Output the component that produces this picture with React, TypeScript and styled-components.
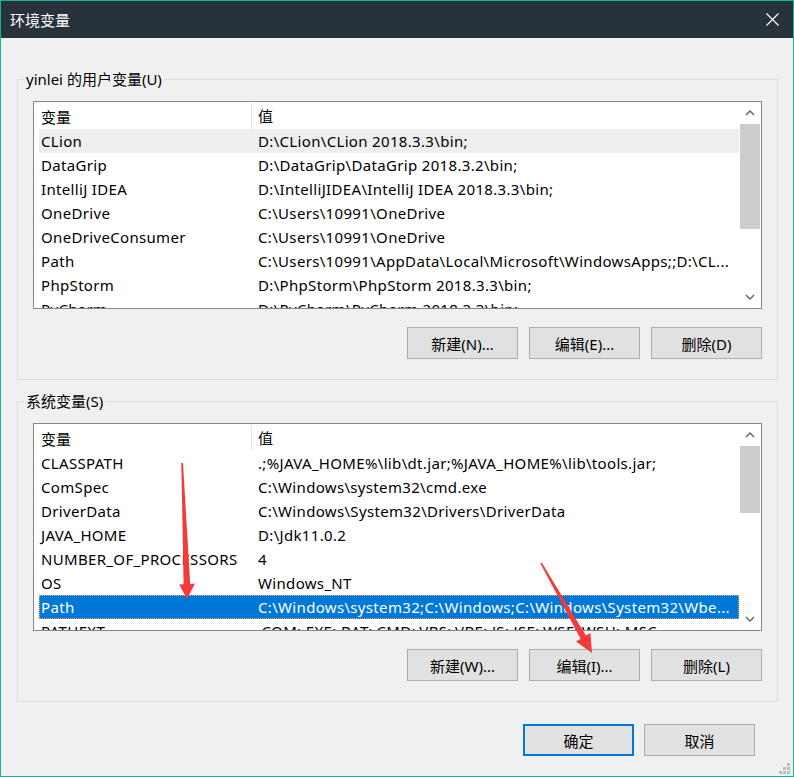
import styled, { createGlobalStyle } from 'styled-components';

type Variable = {
  name: string;
  value: string;
  state?: 'hot' | 'selected';
};

const userVars: Variable[] = [
  { name: 'CLion', value: 'D:\\CLion\\CLion 2018.3.3\\bin;', state: 'hot' },
  { name: 'DataGrip', value: 'D:\\DataGrip\\DataGrip 2018.3.2\\bin;' },
  { name: 'IntelliJ IDEA', value: 'D:\\IntelliJIDEA\\IntelliJ IDEA 2018.3.3\\bin;' },
  { name: 'OneDrive', value: 'C:\\Users\\10991\\OneDrive' },
  { name: 'OneDriveConsumer', value: 'C:\\Users\\10991\\OneDrive' },
  {
    name: 'Path',
    value: 'C:\\Users\\10991\\AppData\\Local\\Microsoft\\WindowsApps;;D:\\CL...',
  },
  { name: 'PhpStorm', value: 'D:\\PhpStorm\\PhpStorm 2018.3.3\\bin;' },
  { name: 'PyCharm', value: 'D:\\PyCharm\\PyCharm 2018.3.3\\bin;' },
];

const systemVars: Variable[] = [
  { name: 'CLASSPATH', value: '.;%JAVA_HOME%\\lib\\dt.jar;%JAVA_HOME%\\lib\\tools.jar;' },
  { name: 'ComSpec', value: 'C:\\Windows\\system32\\cmd.exe' },
  { name: 'DriverData', value: 'C:\\Windows\\System32\\Drivers\\DriverData' },
  { name: 'JAVA_HOME', value: 'D:\\Jdk11.0.2' },
  { name: 'NUMBER_OF_PROCESSORS', value: '4' },
  { name: 'OS', value: 'Windows_NT' },
  {
    name: 'Path',
    value: 'C:\\Windows\\system32;C:\\Windows;C:\\Windows\\System32\\Wbe...',
    state: 'selected',
  },
  { name: 'PATHEXT', value: '.COM;.EXE;.BAT;.CMD;.VBS;.VBE;.JS;.JSE;.WSF;.WSH;.MSC' },
];

const Chevron = ({ up }: { up?: boolean }) => (
  <svg width="10" height="6" viewBox="0 0 10 6">
    <polyline
      points={up ? '1,5 5,1 9,5' : '1,1 5,5 9,1'}
      fill="none"
      stroke="#606060"
      strokeWidth="1.4"
    />
  </svg>
);

type ListProps = {
  rows: Variable[];
  thumbHeight: number;
};

const VariableList = ({ rows, thumbHeight }: ListProps) => (
  <ListBox>
    <ListBody>
      <HeaderRow>
        <NameHeader>变量</NameHeader>
        <ValueCell>值</ValueCell>
      </HeaderRow>
      {rows.map((row, i) => (
        <Row key={i} $state={row.state}>
          <NameCell>{row.name}</NameCell>
          <ValueCell>{row.value}</ValueCell>
        </Row>
      ))}
    </ListBody>
    <Scrollbar>
      <ScrollButton>
        <Chevron up />
      </ScrollButton>
      <Track>
        <Thumb $height={thumbHeight} />
      </Track>
      <ScrollButton>
        <Chevron />
      </ScrollButton>
    </Scrollbar>
  </ListBox>
);

const App = () => {
  return (
    <>
      <GlobalStyle />
      <Window>
        <TitleBar>
          <span>环境变量</span>
          <svg width="13" height="13" viewBox="0 0 13 13">
            <path d="M0.5 0.5 L12.5 12.5 M12.5 0.5 L0.5 12.5" stroke="#fff" strokeWidth="1.2" />
          </svg>
        </TitleBar>

        <Content>
          <Group>
            <GroupLabel>yinlei 的用户变量(U)</GroupLabel>
            <VariableList rows={userVars} thumbHeight={105} />
            <ButtonRow>
              <Button>新建(N)...</Button>
              <Button>编辑(E)...</Button>
              <Button>删除(D)</Button>
            </ButtonRow>
          </Group>

          <Group>
            <GroupLabel>系统变量(S)</GroupLabel>
            <VariableList rows={systemVars} thumbHeight={67} />
            <ButtonRow>
              <Button>新建(W)...</Button>
              <Button>编辑(I)...</Button>
              <Button>删除(L)</Button>
            </ButtonRow>
          </Group>

          <Footer>
            <Button $default>确定</Button>
            <Button>取消</Button>
          </Footer>
        </Content>

        <Grip width="11" height="11" viewBox="0 0 11 11">
          <rect x="8" y="0" width="3" height="3" />
          <rect x="4" y="4" width="3" height="3" />
          <rect x="8" y="4" width="3" height="3" />
          <rect x="0" y="8" width="3" height="3" />
          <rect x="4" y="8" width="3" height="3" />
          <rect x="8" y="8" width="3" height="3" />
        </Grip>

        {/* red annotation arrows drawn over the dialog */}
        <Annotations width="794" height="777" viewBox="0 0 794 777">
          <polygon points="181.3,463 183,463 190.2,584 195,583.5 187,599 179.2,584.5 183.6,584.3" />
          <polygon points="540.4,563.4 541.7,562.6 585.9,635.6 590.4,633 592,653 576,641.6 580.6,638.8" />
        </Annotations>
      </Window>
    </>
  );
};

export default App;

const GlobalStyle = createGlobalStyle`
  html, body {
    margin: 0;
    padding: 0;
    background: #f0f0f0;
  }

  body {
    font-family: "Noto Sans", "Noto Sans CJK SC", sans-serif;
    color: #000;
  }
`;

const Window = styled.div`
  position: relative;
  width: 794px;
  height: 777px;
  box-sizing: border-box;
  border: 1px solid #17b392;
  background: #f0f0f0;
  display: flex;
  flex-direction: column;
  overflow: hidden;
`;

const TitleBar = styled.div`
  height: 37px;
  flex-shrink: 0;
  background: #27323a;
  color: #ffffff;
  display: flex;
  align-items: center;
  justify-content: space-between;
  padding: 0 14px 0 9px;
  font-size: 15px;
`;

const Content = styled.div`
  padding: 31px 15px 0 16px;
  display: flex;
  flex-direction: column;
`;

const Group = styled.fieldset`
  margin: 0;
  padding: 12px 15px 20px;
  border: 1px solid #dcdcdc;
  min-width: 0;

  & + & {
    margin-top: 11px;
  }
`;

const GroupLabel = styled.legend`
  padding: 0 2px;
  margin-left: -9px;
  font-size: 15px;
  line-height: 20px;
  color: #000;
`;

const ListBox = styled.div`
  display: flex;
  height: 208px;
  box-sizing: border-box;
  border: 1px solid #828790;
  background: #ffffff;
`;

const ListBody = styled.div`
  flex: 1;
  min-width: 0;
  overflow: hidden;
  font-size: 15px;
  letter-spacing: 0.33px;
`;

const HeaderRow = styled.div`
  display: flex;
  height: 27px;
  margin-left: 5px;
  align-items: stretch;
  letter-spacing: 0;
`;

const NameHeader = styled.div`
  width: 213px;
  flex-shrink: 0;
  box-sizing: border-box;
  padding: 0 0 0 2px;
  border-right: 1px solid #e5e5e5;
  margin: 1px 0 0;
  display: flex;
  align-items: center;
  white-space: nowrap;
`;

const Row = styled.div<{ $state?: 'hot' | 'selected' }>`
  display: flex;
  height: 24px;
  align-items: center;
  margin-left: 5px;
  box-sizing: border-box;
  white-space: nowrap;
  background: ${(p) =>
    p.$state === 'selected' ? '#0078d7' : p.$state === 'hot' ? '#eeeeee' : 'transparent'};
  color: ${(p) => (p.$state === 'selected' ? '#ffffff' : '#000000')};
  outline: ${(p) => (p.$state === 'selected' ? '1px dotted #e9a45a' : 'none')};
  outline-offset: -1px;
`;

const NameCell = styled.div`
  width: 213px;
  flex-shrink: 0;
  box-sizing: border-box;
  padding-left: 2px;
  overflow: hidden;
  white-space: nowrap;
`;

const ValueCell = styled.div`
  flex: 1;
  min-width: 0;
  padding-left: 6px;
  display: flex;
  align-items: center;
  overflow: hidden;
  white-space: nowrap;
`;

const Scrollbar = styled.div`
  width: 22px;
  flex-shrink: 0;
  display: flex;
  flex-direction: column;
  background: #ffffff;
`;

const ScrollButton = styled.div`
  height: 22px;
  flex-shrink: 0;
  display: flex;
  align-items: center;
  justify-content: center;
`;

const Track = styled.div`
  flex: 1;
  padding: 0 1px;
`;

const Thumb = styled.div<{ $height: number }>`
  height: ${(p) => p.$height}px;
  background: #cdcdcd;
`;

const ButtonRow = styled.div`
  display: flex;
  justify-content: flex-end;
  gap: 11px;
  margin-top: 18px;
`;

const Footer = styled.div`
  display: flex;
  justify-content: flex-end;
  gap: 10px;
  margin-top: 22px;
  padding-right: 23px;
`;

const Button = styled.button<{ $default?: boolean }>`
  width: 111px;
  height: 32px;
  margin: 0;
  padding: 0;
  box-sizing: border-box;
  background: #e1e1e1;
  border: ${(p) => (p.$default ? '2px solid #0078d7' : '1px solid #adadad')};
  font-family: "Noto Sans", "Noto Sans CJK SC", sans-serif;
  font-size: 15px;
  color: #000;
`;

const Grip = styled.svg`
  position: absolute;
  right: 3px;
  bottom: 2px;
  fill: #bcbcbc;
`;

const Annotations = styled.svg`
  position: absolute;
  left: -1px;
  top: -1px;
  pointer-events: none;
  fill: #f23b3b;
`;
